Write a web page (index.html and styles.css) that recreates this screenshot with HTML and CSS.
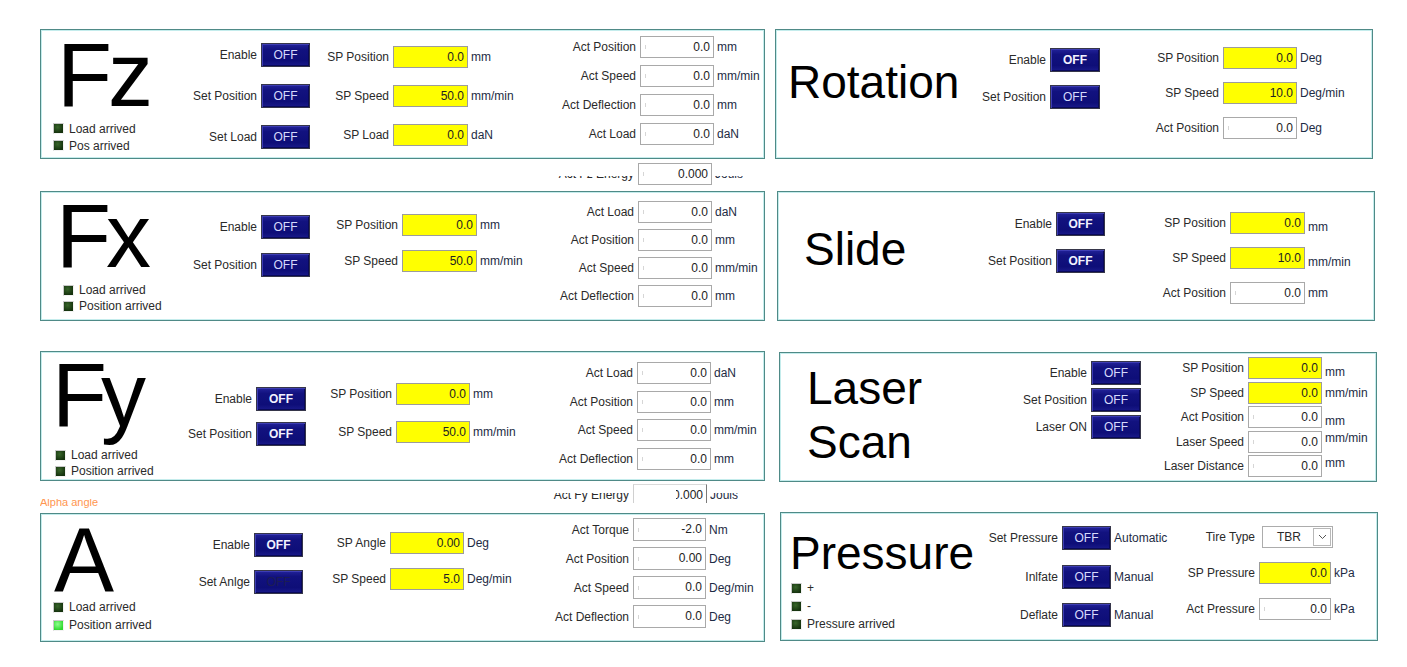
FILE: index.html
```html
<!DOCTYPE html>
<html lang="en">
<head>
  <meta charset="UTF-8" />
  <meta name="viewport" content="width=device-width, initial-scale=1" />
  <title>Test Rig Control</title>
  <link rel="stylesheet" href="styles.css">
</head>
<body>

<div class="screen">

  <div class="col left">

    <section class="panel fz">
      <div class="head">
        <div class="title">Fz</div>
        <ul class="leds">
          <li><span class="led"></span>Load arrived</li>
          <li><span class="led"></span>Pos arrived</li>
        </ul>
      </div>
      <div class="grp btns">
        <div class="field"><label>Enable</label><button class="btn">OFF</button></div>
        <div class="field"><label>Set Position</label><button class="btn">OFF</button></div>
        <div class="field"><label>Set Load</label><button class="btn">OFF</button></div>
      </div>
      <div class="grp sp">
        <div class="field"><label>SP Position</label><span class="val yel">0.0</span><span class="unit">mm</span></div>
        <div class="field"><label>SP Speed</label><span class="val yel">50.0</span><span class="unit">mm/min</span></div>
        <div class="field"><label>SP Load</label><span class="val yel">0.0</span><span class="unit">daN</span></div>
      </div>
      <div class="grp act">
        <div class="field"><label>Act Position</label><span class="val">0.0</span><span class="unit">mm</span></div>
        <div class="field"><label>Act Speed</label><span class="val">0.0</span><span class="unit">mm/min</span></div>
        <div class="field"><label>Act Deflection</label><span class="val">0.0</span><span class="unit">mm</span></div>
        <div class="field"><label>Act Load</label><span class="val">0.0</span><span class="unit">daN</span></div>
      </div>
    </section>

    <div class="spacer s1">
      <div class="field energy e1"><label>Act Fz Energy</label><span class="val">0.000</span><span class="unit">Jouls</span></div>
    </div>

    <section class="panel fx">
      <div class="head">
        <div class="title">Fx</div>
        <ul class="leds">
          <li><span class="led"></span>Load arrived</li>
          <li><span class="led"></span>Position arrived</li>
        </ul>
      </div>
      <div class="grp btns">
        <div class="field"><label>Enable</label><button class="btn">OFF</button></div>
        <div class="field"><label>Set Position</label><button class="btn">OFF</button></div>
      </div>
      <div class="grp sp">
        <div class="field"><label>SP Position</label><span class="val yel">0.0</span><span class="unit">mm</span></div>
        <div class="field"><label>SP Speed</label><span class="val yel">50.0</span><span class="unit">mm/min</span></div>
      </div>
      <div class="grp act">
        <div class="field"><label>Act Load</label><span class="val">0.0</span><span class="unit">daN</span></div>
        <div class="field"><label>Act Position</label><span class="val">0.0</span><span class="unit">mm</span></div>
        <div class="field"><label>Act Speed</label><span class="val">0.0</span><span class="unit">mm/min</span></div>
        <div class="field"><label>Act Deflection</label><span class="val">0.0</span><span class="unit">mm</span></div>
      </div>
    </section>

    <div class="spacer s2"></div>

    <section class="panel fy">
      <div class="head">
        <div class="title">Fy</div>
        <ul class="leds">
          <li><span class="led"></span>Load arrived</li>
          <li><span class="led"></span>Position arrived</li>
        </ul>
      </div>
      <div class="grp btns">
        <div class="field"><label>Enable</label><button class="btn bold">OFF</button></div>
        <div class="field"><label>Set Position</label><button class="btn bold">OFF</button></div>
      </div>
      <div class="grp sp">
        <div class="field"><label>SP Position</label><span class="val yel">0.0</span><span class="unit">mm</span></div>
        <div class="field"><label>SP Speed</label><span class="val yel">50.0</span><span class="unit">mm/min</span></div>
      </div>
      <div class="grp act">
        <div class="field"><label>Act Load</label><span class="val">0.0</span><span class="unit">daN</span></div>
        <div class="field"><label>Act Position</label><span class="val">0.0</span><span class="unit">mm</span></div>
        <div class="field"><label>Act Speed</label><span class="val">0.0</span><span class="unit">mm/min</span></div>
        <div class="field"><label>Act Deflection</label><span class="val">0.0</span><span class="unit">mm</span></div>
      </div>
    </section>

    <div class="spacer s3">
      <span class="alpha">Alpha angle</span>
      <div class="field energy e2"><label>Act Fy Energy</label><span class="val"><span class="cut">0.000</span></span><span class="unit">Jouls</span></div>
    </div>

    <section class="panel pa">
      <div class="head">
        <div class="title">A</div>
        <ul class="leds">
          <li><span class="led"></span>Load arrived</li>
          <li><span class="led on"></span>Position arrived</li>
        </ul>
      </div>
      <div class="grp btns">
        <div class="field"><label>Enable</label><button class="btn bold">OFF</button></div>
        <div class="field"><label>Set Anlge</label><button class="btn dim">OFF</button></div>
      </div>
      <div class="grp sp">
        <div class="field"><label>SP Angle</label><span class="val yel">0.00</span><span class="unit">Deg</span></div>
        <div class="field"><label>SP Speed</label><span class="val yel">5.0</span><span class="unit">Deg/min</span></div>
      </div>
      <div class="grp act">
        <div class="field"><label>Act Torque</label><span class="val">-2.0</span><span class="unit">Nm</span></div>
        <div class="field"><label>Act Position</label><span class="val">0.00</span><span class="unit">Deg</span></div>
        <div class="field"><label>Act Speed</label><span class="val">0.0</span><span class="unit">Deg/min</span></div>
        <div class="field"><label>Act Deflection</label><span class="val">0.0</span><span class="unit">Deg</span></div>
      </div>
    </section>

  </div>

  <div class="col right">

    <section class="panel rot">
      <div class="head"><div class="title">Rotation</div></div>
      <div class="grp btns">
        <div class="field"><label>Enable</label><button class="btn bold">OFF</button></div>
        <div class="field"><label>Set Position</label><button class="btn">OFF</button></div>
      </div>
      <div class="grp sp">
        <div class="field"><label>SP Position</label><span class="val yel">0.0</span><span class="unit">Deg</span></div>
        <div class="field"><label>SP Speed</label><span class="val yel">10.0</span><span class="unit">Deg/min</span></div>
        <div class="field"><label>Act Position</label><span class="val">0.0</span><span class="unit">Deg</span></div>
      </div>
    </section>

    <section class="panel slide">
      <div class="head"><div class="title">Slide</div></div>
      <div class="grp btns">
        <div class="field"><label>Enable</label><button class="btn bold">OFF</button></div>
        <div class="field"><label>Set Position</label><button class="btn bold">OFF</button></div>
      </div>
      <div class="grp sp">
        <div class="field"><label>SP Position</label><span class="val yel">0.0</span><span class="unit low">mm</span></div>
        <div class="field"><label>SP Speed</label><span class="val yel">10.0</span><span class="unit low">mm/min</span></div>
        <div class="field"><label>Act Position</label><span class="val">0.0</span><span class="unit">mm</span></div>
      </div>
    </section>

    <section class="panel laser">
      <div class="head"><div class="title">Laser<br>Scan</div></div>
      <div class="grp btns">
        <div class="field"><label>Enable</label><button class="btn">OFF</button></div>
        <div class="field"><label>Set Position</label><button class="btn">OFF</button></div>
        <div class="field"><label>Laser ON</label><button class="btn">OFF</button></div>
      </div>
      <div class="grp sp">
        <div class="field"><label>SP Position</label><span class="val yel">0.0</span><span class="unit low">mm</span></div>
        <div class="field"><label>SP Speed</label><span class="val yel">0.0</span><span class="unit">mm/min</span></div>
        <div class="field"><label>Act Position</label><span class="val">0.0</span><span class="unit low">mm</span></div>
        <div class="field"><label>Laser Speed</label><span class="val">0.0</span><span class="unit high">mm/min</span></div>
        <div class="field"><label>Laser Distance</label><span class="val">0.0</span><span class="unit high">mm</span></div>
      </div>
    </section>

    <section class="panel press">
      <div class="head">
        <div class="title">Pressure</div>
        <ul class="leds">
          <li><span class="led"></span>+</li>
          <li><span class="led"></span>-</li>
          <li><span class="led"></span>Pressure arrived</li>
        </ul>
      </div>
      <div class="grp btns">
        <div class="field"><label>Set Pressure</label><button class="btn">OFF</button><span class="unit">Automatic</span></div>
        <div class="field"><label>Inlfate</label><button class="btn">OFF</button><span class="unit">Manual</span></div>
        <div class="field"><label>Deflate</label><button class="btn">OFF</button><span class="unit">Manual</span></div>
      </div>
      <div class="grp sp">
        <div class="field"><label>Tire Type</label>
          <div class="select"><span>TBR</span><span class="arrow"><svg width="9" height="6" viewBox="0 0 9 6"><path d="M1 1l3.5 3.5L8 1" fill="none" stroke="#555" stroke-width="1"/></svg></span></div>
        </div>
        <div class="field"><label>SP Pressure</label><span class="val yel">0.0</span><span class="unit">kPa</span></div>
        <div class="field"><label>Act Pressure</label><span class="val">0.0</span><span class="unit">kPa</span></div>
      </div>
    </section>

  </div>

</div>

</body>
</html>
```

FILE: styles.css
```css
body {
  margin: 0;
  background: #fff;
  font-family: "Liberation Sans", Arial, sans-serif;
  font-size: 12px;
  color: #2a2a2a;
}
.screen {
  display: flex;
  padding: 29px 0 0 40px;
}
.col {
  display: flex;
  flex-direction: column;
}
.left {
  width: 725px;
}
.right {
  width: 605px;
  margin-left: 10px;
}

/* panels */
.panel {
  box-sizing: border-box;
  height: 130px;
  border: 1px solid #4f8a87;
  box-shadow: inset 0 0 0 1px #c4ecec;
  background: #fff;
  display: grid;
}
.left .panel {
  width: 725px;
}
.right .panel {
  width: 598px;
}
.head {
  display: flex;
  flex-direction: column;
}
.title {
  font-size: 90px;
  line-height: 66px;
  height: 66px;
  color: #000;
  white-space: nowrap;
}
.right .title {
  font-size: 46px;
  line-height: 54px;
  height: auto;
}
.leds {
  list-style: none;
  margin: 0;
  padding: 0;
}
.leds li {
  display: flex;
  align-items: center;
  gap: 5px;
  height: 17px;
}
.led {
  width: 9px;
  height: 9px;
  border: 1px solid;
  border-color: #c9c9c9 #f2f2f2 #f2f2f2 #c9c9c9;
  background: radial-gradient(circle at 40% 35%, #38652a, #15320e 75%);
}
.led.on {
  background: radial-gradient(circle at 40% 35%, #8dff8d, #2fd82f 75%);
}

/* field rows */
.grp {
  display: flex;
  flex-direction: column;
}
.field {
  display: grid;
  grid-template-columns: var(--lw) var(--cw) auto;
  column-gap: 4px;
  align-items: center;
  height: var(--h, 22px);
}
.field label {
  text-align: right;
  white-space: nowrap;
}
.btns {
  --lw: 80px;
  --cw: 49px;
  --h: 24px;
}
.sp {
  --lw: 79px;
  --cw: 75px;
}
.act {
  --lw: 90px;
  --cw: 74px;
}
.unit {
  color: #1d2b44;
  white-space: nowrap;
  margin-left: -1px;
}
.unit.low {
  padding-top: 7px;
}
.unit.high {
  padding-bottom: 7px;
}
.btn {
  height: 24px;
  padding: 0;
  font: inherit;
  color: #d6dafc;
  border: 1px solid #36364a;
  background: linear-gradient(#23239a, #12127f 25%, #0e0e78 75%, #1a1a8a);
  box-shadow: inset 1px 1px 0 #3d3db4, inset -1px -1px 0 #09095a;
}
.btn.bold {
  font-weight: bold;
  color: #f2f2ff;
}
.btn.dim {
  color: #1c1c55;
}
.val {
  box-sizing: border-box;
  height: var(--h, 22px);
  border: 1px solid #a9a9a9;
  background: #fff linear-gradient(#d6d6d6, #d6d6d6) no-repeat 4px 50% / 1px 4px;
  text-align: right;
  padding-right: 3px;
  line-height: calc(var(--h, 22px) - 2px);
  color: #222;
}
.val.yel {
  background: #ffff00;
  border-color: #9c9c9c;
}
.select {
  box-sizing: border-box;
  height: 22px;
  width: 71px;
  margin-left: 3px;
  border: 1px solid #acacac;
  display: flex;
  align-items: center;
  justify-content: space-between;
  padding: 0 1px 0 14px;
}
.arrow {
  box-sizing: border-box;
  width: 18px;
  height: 18px;
  border: 1px solid #b8b8b8;
  display: flex;
  align-items: center;
  justify-content: center;
}

/* spacers between left panels */
.spacer {
  display: flex;
  align-items: flex-start;
}
.s1 {
  height: 32px;
  padding-top: 4px;
  box-sizing: border-box;
}
.s2 {
  height: 30px;
}
.s3 {
  height: 32px;
}
.energy {
  --lw: 90px;
  --cw: 74px;
}
.e1 {
  margin-left: 504px;
}
.e1 label,
.e1 .unit {
  clip-path: inset(9px 0 0 0);
}
.alpha {
  width: 80px;
  margin-top: 15px;
  font-size: 11px;
  color: #ff9650;
  clip-path: inset(3px 0 0 0);
}
.e2 {
  margin-left: 419px;
  margin-top: 3px;
  height: 19px;
  overflow: hidden;
  align-items: start;
}
.e2 label,
.e2 .unit {
  line-height: 22px;
  clip-path: inset(9px 0 0 0);
}
.e2 .val {
  border: 0;
  border-top: 1px solid #dadada;
  border-left: 1px solid #d0d0d0;
  border-right: 1px solid #7a7a7a;
  background: #fff;
  height: 22px;
}
.cut {
  display: inline-block;
  clip-path: inset(0 0 0 3px);
}

/* Fz */
.fz {
  grid-template-columns: 136px 133px 236px 1fr;
}
.fz .title { margin: 12px 0 0 16px; letter-spacing: -4px; }
.fz .leds { padding-left: 12px; margin-top: 12px; }
.fz .btns { padding-top: 13px; gap: 17px; }
.fz .sp { padding-top: 16px; gap: 17px; }
.fz .act { padding-top: 6px; gap: 7px; }

/* Fx */
.fx {
  grid-template-columns: 136px 142px 225px 1fr;
}
.fx .title { margin: 11px 0 0 15px; letter-spacing: -5px; }
.fx .leds { padding-left: 22px; margin-top: 13px; }
.fx .leds li { height: 16px; }
.fx .btns { padding-top: 23px; gap: 14px; }
.fx .sp { padding-top: 22px; gap: 14px; }
.fx .act { padding-top: 9px; gap: 6px; }

/* Fy */
.fy {
  grid-template-columns: 131px 141px 231px 1fr;
}
.fy .title { margin: 10px 0 0 11px; letter-spacing: -6px; }
.fy .leds { padding-left: 14px; margin-top: 19px; }
.fy .leds li { height: 16px; }
.fy .btns { --cw: 50px; padding-top: 35px; gap: 11px; }
.fy .sp { --cw: 74px; padding-top: 31px; gap: 16px; }
.fy .act { --lw: 89px; padding-top: 10px; gap: 6.5px; }

/* A */
.pa {
  height: 129px;
  grid-template-columns: 129px 137px 232px 1fr;
}
.pa .title { margin: 13px 0 0 13px; }
.pa .leds { padding-left: 12px; margin-top: 5px; }
.pa .leds li { height: 18px; }
.pa .btns { padding-top: 19px; gap: 13px; }
.pa .sp { --cw: 74px; padding-top: 18px; gap: 14px; }
.pa .act { --cw: 73px; --h: 23px; padding-top: 4px; gap: 6px; }

/* Rotation */
.rot {
  grid-template-columns: 190px 163px 1fr;
}
.rot .title { margin: 25px 0 0 12px; }
.rot .btns { --cw: 50px; padding-top: 18px; gap: 13px; }
.rot .sp { --lw: 90px; --cw: 74px; padding-top: 17px; gap: 13px; }

/* Slide */
.slide {
  margin: 32px 0 0 2px;
  grid-template-columns: 194px 166px 1fr;
}
.slide .title { margin: 30px 0 0 26px; }
.slide .btns { padding-top: 20px; gap: 13px; }
.slide .sp { --lw: 88px; padding-top: 20px; gap: 13px; }

/* Laser Scan */
.laser {
  margin: 31px 0 0 4px;
  grid-template-columns: 227px 147px 1fr;
}
.laser .title { margin: 8px 0 0 27px; }
.laser .btns { --cw: 50px; padding-top: 8px; gap: 3px; }
.laser .sp { --lw: 90px; --cw: 74px; padding-top: 4px; gap: 2.5px; }

/* Pressure */
.press {
  margin: 30px 0 0 5px;
  height: 129px;
  grid-template-columns: 197px 187px 1fr;
}
.press .title { margin: 13px 0 0 9px; }
.press .leds { padding-left: 10px; margin-top: -1px; }
.press .leds li { height: 18px; }
.press .btns { padding-top: 13px; gap: 14.5px; }
.press .sp { --lw: 90px; --cw: 72px; padding-top: 13px; gap: 14px; }
```
